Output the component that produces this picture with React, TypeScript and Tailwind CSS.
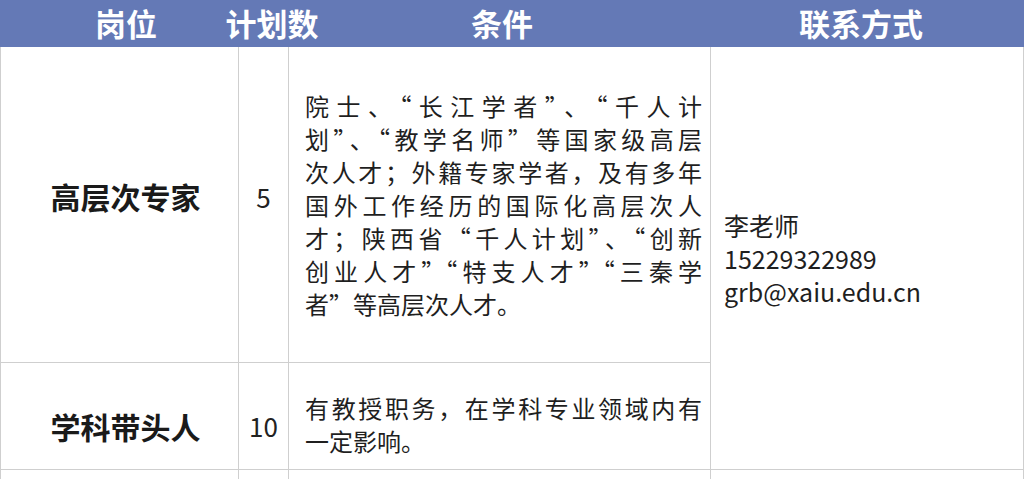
import React from "react";

const cjk = { fontFamily: '"Noto Sans CJK SC", "Noto Sans", sans-serif' };

const rows = [
  {
    id: "expert",
    title: "高层次专家",
    count: "5",
    lines: [
      "院士、“长江学者”、“千人计",
      "划”、“教学名师”等国家级高层",
      "次人才；外籍专家学者，及有多年",
      "国外工作经历的国际化高层次人",
      "才；陕西省“千人计划”、“创新",
      "创业人才”“特支人才”“三秦学",
      "者”等高层次人才。",
    ],
  },
  {
    id: "leader",
    title: "学科带头人",
    count: "10",
    lines: ["有教授职务，在学科专业领域内有", "一定影响。"],
  },
];

const cell = "border-r border-b border-[#cfcfcf] bg-white";

const Condition = ({ lines }: { lines: string[] }) => (
  <div className="w-full text-[24px] leading-[33px] text-[#1f1f1f]">
    {lines.map((line, i) => (
      <div
        key={i}
        className={i < lines.length - 1 ? "text-justify [text-align-last:justify]" : ""}
      >
        {line}
      </div>
    ))}
  </div>
);

export default function App() {
  return (
    <div className="w-[1024px] h-[479px] overflow-hidden bg-white" style={cjk}>
      {/* header */}
      <div className="grid grid-cols-[238px_50px_422px_314px] h-[47px] bg-[#6479b6] text-white font-bold text-[31px]">
        <div className="flex items-center justify-center pl-[14px]">岗位</div>
        <div className="flex items-center justify-center whitespace-nowrap pl-[18px]">计划数</div>
        <div className="flex items-center justify-center pl-[6px]">条件</div>
        <div className="flex items-center justify-center pr-[12px]">联系方式</div>
      </div>

      {/* body */}
      <div className="grid grid-cols-[238px_50px_422px_313px] grid-rows-[316px_107px_60px] border-l border-[#cfcfcf]">
        {/* row 1 */}
        <div className={`${cell} flex items-center justify-center pl-[12px] pb-[16px] font-bold text-[30px] text-[#1a1a1a]`}>
          {rows[0].title}
        </div>
        <div className={`${cell} flex items-center justify-center pb-[16px] text-[26px] text-[#222]`}>
          {rows[0].count}
        </div>
        <div className={`${cell} flex items-center pl-[16px] pr-[8px]`}>
          <Condition lines={rows[0].lines} />
        </div>
        <div className={`${cell} row-span-2 flex items-center pl-[13px]`}>
          <div className="text-[25px] leading-[33px] text-[#1f1f1f]">
            <div>李老师</div>
            <div>15229322989</div>
            <div>grb@xaiu.edu.cn</div>
          </div>
        </div>

        {/* row 2 */}
        <div className={`${cell} flex items-center justify-center pl-[12px] pt-[20px] font-bold text-[30px] text-[#1a1a1a]`}>
          {rows[1].title}
        </div>
        <div className={`${cell} flex items-center justify-center pt-[18px] text-[26px] text-[#222]`}>
          {rows[1].count}
        </div>
        <div className={`${cell} flex items-center pl-[16px] pr-[8px] pt-[16px]`}>
          <Condition lines={rows[1].lines} />
        </div>

        {/* row 3 (cut off) */}
        <div className={cell} />
        <div className={cell} />
        <div className={cell} />
        <div className={cell} />
      </div>
    </div>
  );
}
